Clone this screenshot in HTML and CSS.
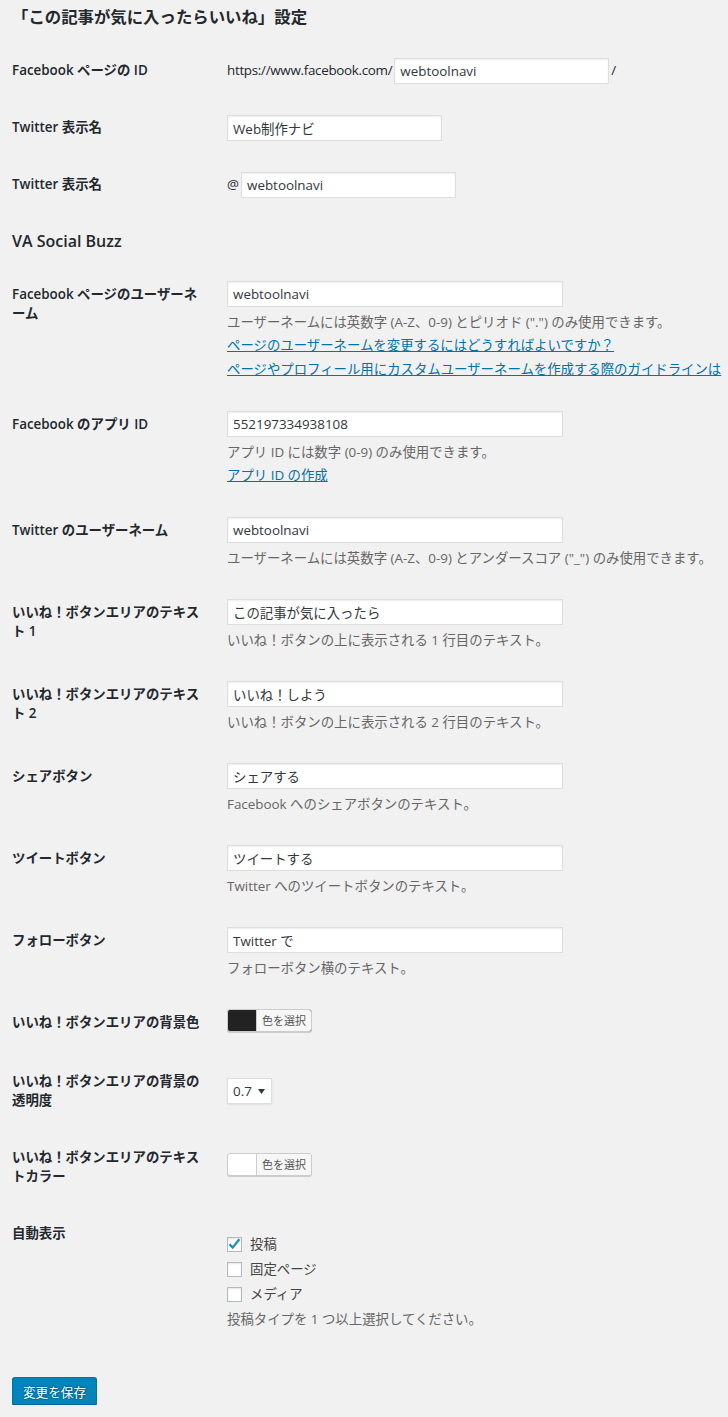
FILE: index.html
```html
<!DOCTYPE html>
<html lang="ja">
<head>
<meta charset="UTF-8">
<meta name="viewport" content="width=device-width, initial-scale=1.0">
<title>「この記事が気に入ったらいいね」設定</title>
<link rel="stylesheet" href="styles.css">
</head>
<body>
<form class="wrap">
    <h2>「この記事が気に入ったらいいね」設定</h2>
    <table class="form-table">
        <tr>
            <th>Facebook ページの ID</th>
            <td>
                <div class="inline-field"><span class="prefix">https://www.facebook.com/</span><input type="text" class="short-text" value="webtoolnavi">/</div>
            </td>
        </tr>
        <tr>
            <th>Twitter 表示名</th>
            <td><input type="text" class="short-text" value="Web制作ナビ"></td>
        </tr>
        <tr>
            <th>Twitter 表示名</th>
            <td>
                <div class="inline-field">@<input type="text" class="short-text" value="webtoolnavi"></div>
            </td>
        </tr>
    </table>

    <h2 class="section">VA Social Buzz</h2>
    <table class="form-table">
        <tr>
            <th>Facebook ページのユーザーネーム</th>
            <td>
                <input type="text" class="regular-text" value="webtoolnavi">
                <p class="description">ユーザーネームには英数字 (A-Z、0-9) とピリオド (".") のみ使用できます。</p>
                <p class="description link"><a href="#">ページのユーザーネームを変更するにはどうすればよいですか？</a></p>
                <p class="description link"><a href="#">ページやプロフィール用にカスタムユーザーネームを作成する際のガイドラインは</a></p>
            </td>
        </tr>
        <tr>
            <th>Facebook のアプリ ID</th>
            <td>
                <input type="text" class="regular-text" value="552197334938108">
                <p class="description">アプリ ID には数字 (0-9) のみ使用できます。</p>
                <p class="description link"><a href="#">アプリ ID の作成</a></p>
            </td>
        </tr>
        <tr>
            <th>Twitter のユーザーネーム</th>
            <td>
                <input type="text" class="regular-text" value="webtoolnavi">
                <p class="description">ユーザーネームには英数字 (A-Z、0-9) とアンダースコア ("_") のみ使用できます。</p>
            </td>
        </tr>
        <tr>
            <th>いいね！ボタンエリアのテキスト 1</th>
            <td>
                <input type="text" class="regular-text" value="この記事が気に入ったら">
                <p class="description">いいね！ボタンの上に表示される 1 行目のテキスト。</p>
            </td>
        </tr>
        <tr>
            <th>いいね！ボタンエリアのテキスト 2</th>
            <td>
                <input type="text" class="regular-text" value="いいね！しよう">
                <p class="description">いいね！ボタンの上に表示される 2 行目のテキスト。</p>
            </td>
        </tr>
        <tr>
            <th>シェアボタン</th>
            <td>
                <input type="text" class="regular-text" value="シェアする">
                <p class="description">Facebook へのシェアボタンのテキスト。</p>
            </td>
        </tr>
        <tr>
            <th>ツイートボタン</th>
            <td>
                <input type="text" class="regular-text" value="ツイートする">
                <p class="description">Twitter へのツイートボタンのテキスト。</p>
            </td>
        </tr>
        <tr>
            <th>フォローボタン</th>
            <td>
                <input type="text" class="regular-text" value="Twitter で">
                <p class="description">フォローボタン横のテキスト。</p>
            </td>
        </tr>
        <tr>
            <th>いいね！ボタンエリアの背景色</th>
            <td>
                <div class="picker">
                    <button type="button" class="color-result dark"><span>色を選択</span></button>
                </div>
            </td>
        </tr>
        <tr>
            <th>いいね！ボタンエリアの背景の透明度</th>
            <td>
                <div class="select">
                    <select>
                        <option>0.7</option>
                    </select>
                    <svg width="7" height="5" viewBox="0 0 7 5"><path d="M0 0 L7 0 L3.5 5 Z" fill="#32373c"/></svg>
                </div>
            </td>
        </tr>
        <tr>
            <th>いいね！ボタンエリアのテキストカラー</th>
            <td>
                <div class="picker">
                    <button type="button" class="color-result light"><span>色を選択</span></button>
                </div>
            </td>
        </tr>
        <tr>
            <th>自動表示</th>
            <td>
                <fieldset>
                    <label class="check">
                        <span class="box"><svg width="13" height="13" viewBox="0 0 13 13"><path d="M1.5 6.3 L4.6 9.6 L11.4 1.2" fill="none" stroke="#1e8cbe" stroke-width="2.3"/></svg></span>
                        投稿
                    </label>
                    <label class="check"><span class="box"></span>固定ページ</label>
                    <label class="check"><span class="box"></span>メディア</label>
                    <p class="description note">投稿タイプを 1 つ以上選択してください。</p>
                </fieldset>
            </td>
        </tr>
    </table>

    <p class="submit"><button type="button" class="button-primary">変更を保存</button></p>
</form>
</body>
</html>
```

FILE: styles.css
```css
html, body {
    overflow-x: hidden;
}
body {
    margin: 0;
    background: #f1f1f1;
    color: #23282d;
    font-family: "Open Sans", "Noto Sans CJK JP", sans-serif;
    font-size: 13.4px;
}
.wrap {
    padding: 0 0 0 12px;
}
h2 {
    margin: 6px 0 0;
    font-size: 16.4px;
    font-weight: 600;
    line-height: 22px;
}
h2.section {
    margin-top: 17px;
    font-size: 16px;
}
.form-table {
    margin-top: 14px;
    border-collapse: collapse;
    table-layout: fixed;
    width: 700px;
}
.form-table th {
    width: 195px;
    padding: 19px 10px 19px 0;
    text-align: left;
    vertical-align: top;
    font-weight: 600;
    line-height: 19px;
}
.form-table td {
    padding: 15px 10px;
    vertical-align: middle;
    line-height: 19px;
}
input[type="text"] {
    box-sizing: border-box;
    height: 26px;
    margin: 0;
    padding: 0 5px;
    border: 1px solid #ddd;
    background: #fff;
    box-shadow: inset 0 1px 2px rgba(0, 0, 0, .07);
    color: #32373c;
    font: inherit;
    outline: none;
}
.regular-text {
    display: block;
    width: 336px;
}
.short-text {
    width: 215px;
}
.inline-field {
    display: flex;
    align-items: center;
    gap: 2px;
    white-space: nowrap;
}
.prefix {
    letter-spacing: -0.3px;
}
.description {
    margin: 4px 0 0;
    color: #666;
    line-height: 22px;
    white-space: nowrap;
}
.description.link {
    margin: 0;
    line-height: 24px;
}
.description a {
    color: #0073aa;
}
.picker {
    padding-bottom: 6px;
}
.color-result {
    display: inline-flex;
    box-sizing: border-box;
    height: 23px;
    margin: 0;
    padding: 0 0 0 28px;
    border: 1px solid #ccc;
    border-radius: 3px;
    box-shadow: 0 1px 0 #ccc;
    cursor: pointer;
}
.color-result.dark {
    background: #222;
}
.color-result.light {
    background: #fff;
}
.color-result span {
    padding: 0 5px;
    border-left: 1px solid #ccc;
    border-radius: 0 2px 2px 0;
    background: #f7f7f7;
    color: #555;
    font-family: "Open Sans", "Noto Sans CJK JP", sans-serif;
    font-size: 11px;
    line-height: 21px;
}
.select {
    display: inline-flex;
    align-items: center;
    box-sizing: border-box;
    width: 45px;
    height: 26px;
    border: 1px solid #ddd;
    background: #fff;
    box-shadow: 0 1px 2px rgba(0, 0, 0, .07);
}
.select select {
    flex: 1;
    min-width: 0;
    padding: 0 0 0 5px;
    border: none;
    background: transparent;
    color: #32373c;
    font: inherit;
    appearance: none;
    -webkit-appearance: none;
    outline: none;
}
.select svg {
    margin-right: 6px;
}
fieldset {
    margin: 0;
    padding: 12px 0 0;
    border: none;
}
.check {
    display: flex;
    align-items: center;
    gap: 8px;
    height: 25px;
    color: #444;
}
.box {
    display: flex;
    align-items: center;
    justify-content: center;
    box-sizing: border-box;
    width: 15px;
    height: 15px;
    border: 1px solid #b4b9be;
    background: #fff;
    box-shadow: inset 0 1px 2px rgba(0, 0, 0, .1);
}
.description.note {
    margin-top: 1px;
}
.submit {
    margin: 32px 0 0;
}
.button-primary {
    box-sizing: border-box;
    height: 28px;
    padding: 0 10px;
    border: 1px solid #0073aa;
    border-bottom-color: #006799;
    border-radius: 3px;
    background: #0085ba;
    box-shadow: 0 1px 0 #006799;
    color: #fff;
    font-family: "Open Sans", "Noto Sans CJK JP", sans-serif;
    font-size: 12.6px;
    text-shadow: 0 -1px 1px #006799, 1px 0 1px #006799, 0 1px 1px #006799, -1px 0 1px #006799;
    cursor: pointer;
}
```
